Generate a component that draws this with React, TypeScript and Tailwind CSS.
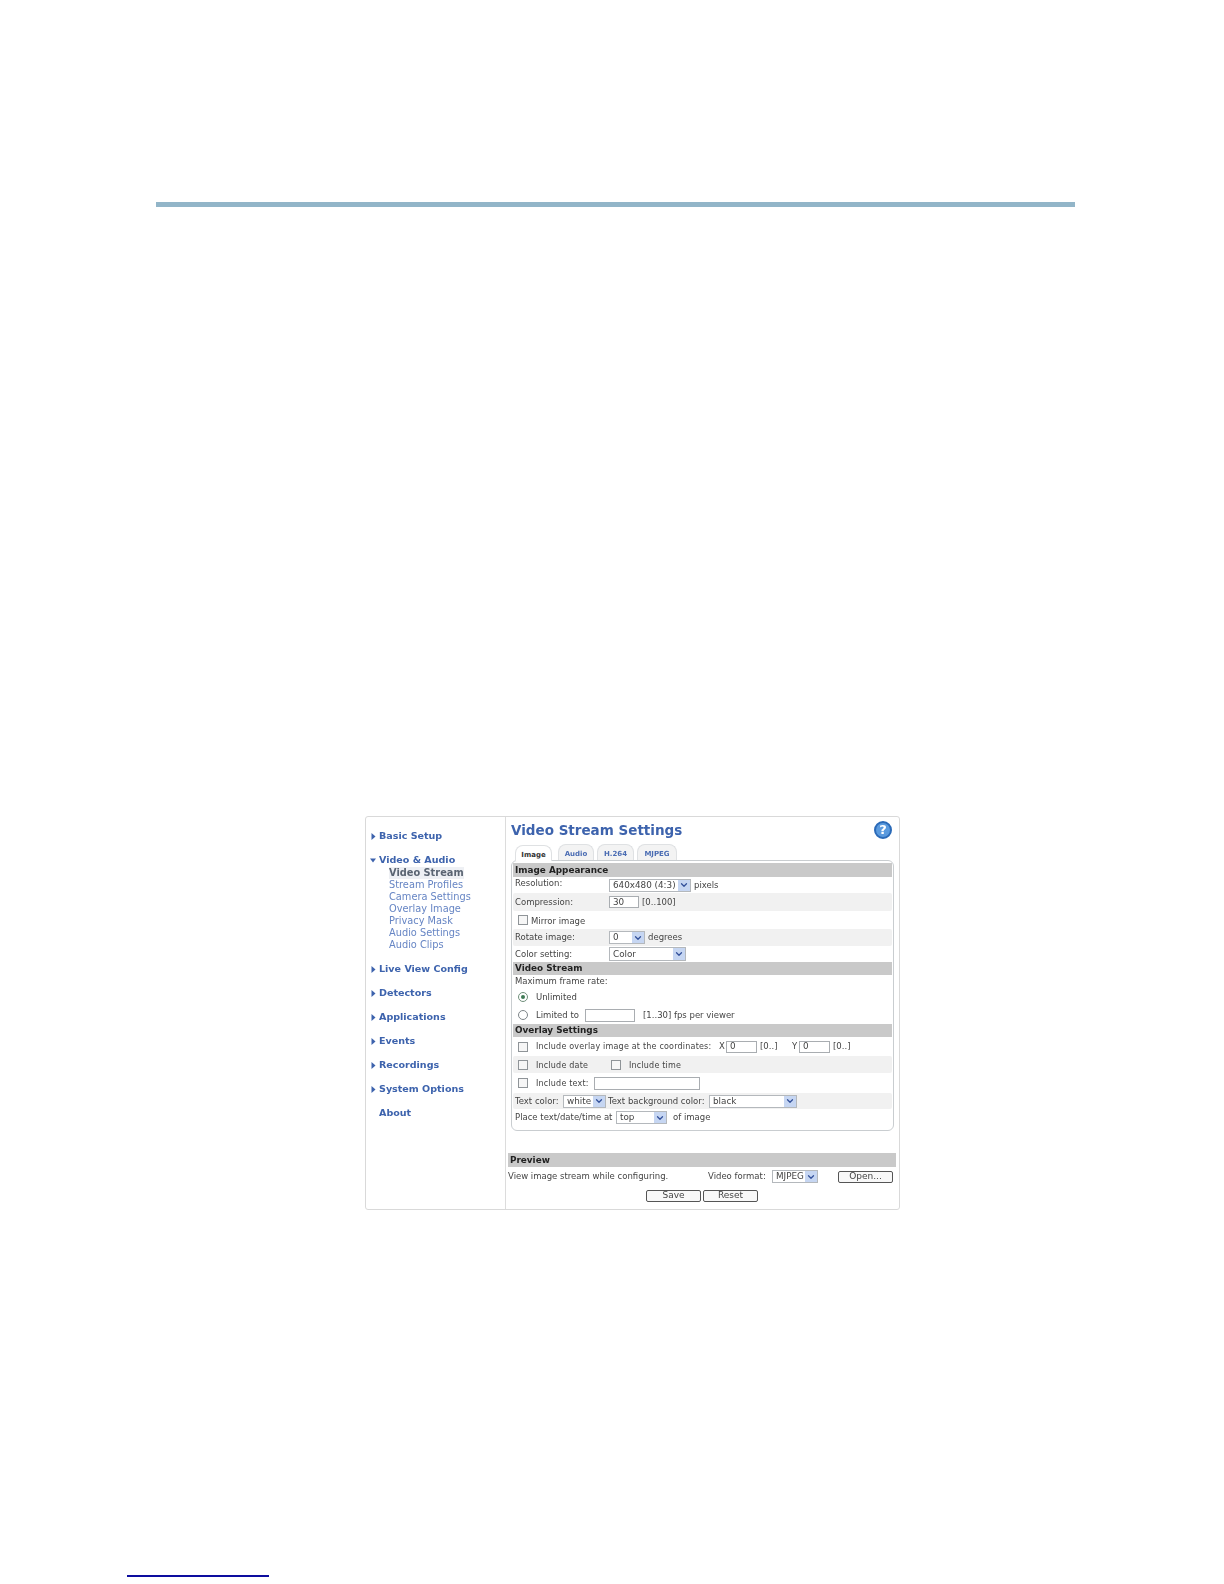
import type { ReactNode } from "react";
import { ChevronDown } from "lucide-react";

const topItems = ["Live View Config", "Detectors", "Applications", "Events", "Recordings", "System Options"];
const subItems = ["Stream Profiles", "Camera Settings", "Overlay Image", "Privacy Mask", "Audio Settings", "Audio Clips"];

function Arrow({ open }: { open?: boolean }) {
  return open ? (
    <svg width="6" height="5" viewBox="0 0 6 5" className="shrink-0">
      <path d="M0 0.5h6L3 4.5z" fill="#3d63ad" />
    </svg>
  ) : (
    <svg width="5" height="7" viewBox="0 0 5 7" className="shrink-0">
      <path d="M0.5 0l4 3.5-4 3.5z" fill="#3d63ad" />
    </svg>
  );
}

function NavItem({ label, arrow = true }: { label: string; arrow?: boolean }) {
  return (
    <div className="flex h-[12px] items-center">
      <div className="flex w-[13px] justify-start pl-[5px]">{arrow && <Arrow />}</div>
      <span className="text-[9.55px] font-bold text-[#3d63ad]">{label}</span>
    </div>
  );
}

function Select({ value, w, h = 13 }: { value: string; w: string; h?: number }) {
  return (
    <div
      className={`flex shrink-0 items-center justify-between border border-[#b4b8bc] bg-white pl-[3px] ${w} ${h === 13 ? "h-[13px]" : "h-[14px]"}`}
    >
      <span className="text-[8.8px] leading-none text-[#444]">{value}</span>
      <div className="flex h-full w-[12px] items-center justify-center bg-[#c6d6f2]">
        <ChevronDown size={10} strokeWidth={3} className="text-[#33509a]" />
      </div>
    </div>
  );
}

function Input({ w, value, h = "h-[12px]" }: { w: string; value?: string; h?: string }) {
  return (
    <div className={`flex shrink-0 items-center border border-[#a9adb1] bg-white pl-[3px] ${w} ${h}`}>
      <span className="text-[8.8px] leading-none text-[#444]">{value}</span>
    </div>
  );
}

function Check({ className = "" }: { className?: string }) {
  return <div className={`size-[10px] shrink-0 border border-[#8f9498] bg-[#f6f6f6] ${className}`} />;
}

function Row({ h, gray, children }: { h: string; gray?: boolean; children: ReactNode }) {
  return (
    <div className={`flex items-center whitespace-nowrap text-[8.5px] text-[#444] ${h} ${gray ? "rounded-[2px] bg-[#f1f1f1]" : ""}`}>
      {children}
    </div>
  );
}

function Header({ label, h }: { label: string; h: string }) {
  return (
    <div className={`flex items-center bg-[#c9c9c9] pl-[2px] text-[8.85px] font-bold text-[#222] ${h}`}>{label}</div>
  );
}

function Tab({ label, w, active }: { label: string; w: string; active?: boolean }) {
  return (
    <div
      className={`flex h-[16px] items-center justify-center rounded-t-[8px] border border-b-0 border-[#dfe1e3] pt-[3px] text-[7px] font-bold ${w} ${
        active ? "relative top-px mr-[3px] bg-white text-[#333]" : "bg-[#f3f3f3] text-[#4a6cb3]"
      }`}
    >
      {label}
    </div>
  );
}

function Button({ label, w }: { label: string; w: string }) {
  return (
    <div className={`flex h-[12px] items-center justify-center rounded-[2px] border border-[#555] bg-[#f8f8f8] text-[9px] text-[#444] ${w}`}>
      {label}
    </div>
  );
}

export default function App() {
  return (
    <div className="flex h-[1584px] w-[1224px] flex-col overflow-hidden bg-white font-['DejaVu_Sans',sans-serif]">
      <div className="ml-[156px] mt-[202px] h-[5px] w-[919px] bg-[#92b5c8]" />

      <div className="ml-[365px] mt-[609px] flex h-[394px] w-[535px] rounded-[3px] border border-[#d9d9d9] blur-[0.4px]">
        <div className="w-[140px] shrink-0 border-r border-[#dcdcdc] pt-[13px]">
          <NavItem label="Basic Setup" />
          <div className="mt-[12px] flex h-[12px] items-center">
            <div className="w-[13px] pl-[4px]"><Arrow open /></div>
            <span className="text-[9.55px] font-bold text-[#3d63ad]">Video & Audio</span>
          </div>
          <div className="ml-[23px] mt-[1px] flex flex-col text-[9.8px] leading-[12px] text-[#6685c4]">
            <span className="w-fit bg-[#eef0f4] font-bold text-[#5a6472]">Video Stream</span>
            {subItems.map((item) => (
              <span key={item}>{item}</span>
            ))}
          </div>
          <div className="mt-[12px] flex flex-col gap-[12px]">
            {topItems.map((item) => (
              <NavItem key={item} label={item} />
            ))}
            <NavItem label="About" arrow={false} />
          </div>
        </div>

        <div className="flex min-w-0 flex-1 flex-col pl-[2px] pr-[3px]">
          <div className="flex h-[26px] items-center justify-between pl-[3px] pr-[4px]">
            <span className="text-[13.5px] font-bold text-[#3d63ad]">Video Stream Settings</span>
            <div className="flex size-[18px] items-center justify-center rounded-full border-2 border-[#2a6ab8] bg-[#5a9ade] text-[13px] font-bold text-white">
              ?
            </div>
          </div>
          <div className="ml-[7px] mt-[1px] flex h-[16px] gap-[3px]">
            <Tab label="Image" w="w-[37px]" active />
            <Tab label="Audio" w="w-[36px]" />
            <Tab label="H.264" w="w-[37px]" />
            <Tab label="MJPEG" w="w-[40px]" />
          </div>
          <div className="ml-[3px] mr-[2px] h-[271px] rounded-[6px] border border-[#c9cdd0] px-[1px] pt-[2px]">
            <Header label="Image Appearance" h="h-[14px] pt-[2px]" />
            <Row h="h-[16px]">
              <span className="w-[96px] pb-[3px] pl-[2px]">Resolution:</span>
              <Select value="640x480 (4:3)" w="w-[82px]" />
              <span className="ml-[3px] pt-[1px]">pixels</span>
            </Row>
            <Row h="h-[18px]" gray>
              <span className="w-[96px] pl-[2px]">Compression:</span>
              <Input w="w-[30px]" value="30" />
              <span className="ml-[3px]">[0..100]</span>
            </Row>
            <Row h="h-[18px]">
              <Check className="ml-[5px]" />
              <span className="ml-[3px] pt-[2px]">Mirror image</span>
            </Row>
            <Row h="h-[17px]" gray>
              <span className="w-[96px] pl-[2px]">Rotate image:</span>
              <Select value="0" w="w-[36px]" />
              <span className="ml-[3px]">degrees</span>
            </Row>
            <Row h="h-[16px]">
              <span className="w-[96px] pl-[2px]">Color setting:</span>
              <Select value="Color" w="w-[77px]" h={14} />
            </Row>
            <Header label="Video Stream" h="h-[13px] pt-[1px]" />
            <Row h="h-[13px]">
              <span className="pl-[2px]">Maximum frame rate:</span>
            </Row>
            <Row h="h-[18px]">
              <div className="ml-[5px] flex size-[10px] items-center justify-center rounded-full border border-[#6f8f7a] bg-white">
                <div className="size-[4px] rounded-full bg-[#3f7a55]" />
              </div>
              <span className="ml-[8px]">Unlimited</span>
            </Row>
            <Row h="h-[18px]">
              <div className="ml-[5px] size-[10px] rounded-full border border-[#7d8488] bg-white" />
              <span className="ml-[8px] w-[49px]">Limited to</span>
              <Input w="w-[50px]" h="h-[13px]" />
              <span className="ml-[8px]">[1..30] fps per viewer</span>
            </Row>
            <Header label="Overlay Settings" h="h-[13px]" />
            <Row h="h-[19px]">
              <Check className="ml-[5px]" />
              <span className="ml-[8px] w-[183px] text-[8px] tracking-[0.2px]">Include overlay image at the coordinates:</span>
              <span className="w-[7px]">X</span>
              <Input w="w-[31px]" value="0" />
              <span className="ml-[3px] w-[32px]">[0..]</span>
              <span className="w-[7px]">Y</span>
              <Input w="w-[31px]" value="0" />
              <span className="ml-[3px]">[0..]</span>
            </Row>
            <Row h="h-[17px]" gray>
              <Check className="ml-[5px]" />
              <span className="ml-[8px] w-[75px] pt-[2px] text-[8px] tracking-[0.2px]">Include date</span>
              <Check />
              <span className="ml-[8px] pt-[2px] text-[8px] tracking-[0.2px]">Include time</span>
            </Row>
            <Row h="h-[20px]">
              <Check className="ml-[5px]" />
              <span className="ml-[8px] w-[58px] pt-[2px] text-[8px] tracking-[0.2px]">Include text:</span>
              <Input w="w-[106px]" h="h-[13px]" />
            </Row>
            <Row h="h-[16px]" gray>
              <span className="w-[50px] pl-[2px]">Text color:</span>
              <Select value="white" w="w-[43px]" />
              <span className="ml-[2px] w-[101px]">Text background color:</span>
              <Select value="black" w="w-[88px]" />
            </Row>
            <Row h="h-[17px]">
              <span className="w-[103px] pl-[2px]">Place text/date/time at</span>
              <Select value="top" w="w-[51px]" />
              <span className="ml-[6px]">of image</span>
            </Row>
          </div>
          <div className="mt-[22px] flex h-[14px] items-center bg-[#c9c9c9] pl-[2px] pt-[1px] text-[8.85px] font-bold text-[#222]">
            Preview
          </div>
          <Row h="h-[19px]">
            <span className="w-[200px]">View image stream while configuring.</span>
            <span className="w-[64px]">Video format:</span>
            <Select value="MJPEG" w="w-[46px]" />
            <div className="ml-[20px]">
              <Button label="Open..." w="w-[55px]" />
            </div>
          </Row>
          <div className="ml-[138px] mt-[4px] flex gap-[2px]">
            <Button label="Save" w="w-[55px]" />
            <Button label="Reset" w="w-[55px]" />
          </div>
        </div>
      </div>

      <div className="ml-[127px] mt-[365px] h-[1.5px] w-[142px] bg-[#0d0d9e]" />
    </div>
  );
}
